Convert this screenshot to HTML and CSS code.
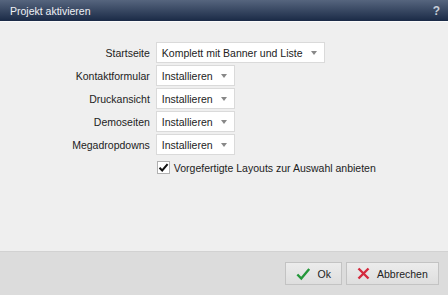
FILE: index.html
```html
<!DOCTYPE html>
<html lang="de">
<head>
    <meta charset="UTF-8">
    <title>Projekt aktivieren</title>
    <link rel="stylesheet" href="styles.css">
</head>
<body>
    <div class="dialog">
        <div class="titlebar">
            <span class="title">Projekt aktivieren</span>
            <span class="help">?</span>
        </div>
        <div class="content">
            <div class="form">
                <label>Startseite</label>
                <div class="select">Komplett mit Banner und Liste<span class="arrow"></span></div>
                <label>Kontaktformular</label>
                <div class="select">Installieren<span class="arrow"></span></div>
                <label>Druckansicht</label>
                <div class="select">Installieren<span class="arrow"></span></div>
                <label>Demoseiten</label>
                <div class="select">Installieren<span class="arrow"></span></div>
                <label>Megadropdowns</label>
                <div class="select">Installieren<span class="arrow"></span></div>
                <span></span>
                <div class="check">
                    <span class="box">
                        <svg width="11" height="11" viewBox="0 0 11 11"><path d="M1.5 5.8 L4.2 8.5 L9.6 2.2" fill="none" stroke="#111" stroke-width="2"/></svg>
                    </span>
                    Vorgefertigte Layouts zur Auswahl anbieten
                </div>
            </div>
        </div>
        <div class="footer">
            <button class="btn">
                <svg width="16" height="14" viewBox="0 0 16 14"><path d="M1.5 7.5 L5.8 12 L14.5 1.5" fill="none" stroke="#24973a" stroke-width="2.6"/></svg>
                Ok
            </button>
            <button class="btn">
                <svg width="13" height="13" viewBox="0 0 13 13"><path d="M1.5 1.5 L11.5 11.5 M11.5 1.5 L1.5 11.5" fill="none" stroke="#d42a3e" stroke-width="2.4"/></svg>
                Abbrechen
            </button>
        </div>
    </div>
</body>
</html>
```

FILE: styles.css
```css
body {
    margin: 0;
    font-family: "Liberation Sans", Arial, sans-serif;
    font-size: 10.5px;
    color: #222;
}
.dialog {
    width: 448px;
    height: 295px;
    display: flex;
    flex-direction: column;
    background-color: #efefef;
}
.titlebar {
    height: 21px;
    display: flex;
    align-items: center;
    justify-content: space-between;
    padding: 0 8px 0 10px;
    background: linear-gradient(#56657e, #1a2a46);
    color: #eef1f5;
    border-bottom: 1px solid #fafafa;
}
.help {
    font-weight: bold;
    font-size: 12px;
    color: #c8ced8;
}
.content {
    flex: 1;
    display: flex;
    justify-content: center;
    padding-top: 20px;
}
.form {
    display: grid;
    grid-template-columns: auto auto;
    column-gap: 6px;
    row-gap: 2px;
    align-content: start;
    align-items: center;
}
.form label {
    text-align: right;
}
.select {
    justify-self: start;
    height: 19px;
    display: flex;
    align-items: center;
    padding: 0 7px 0 5px;
    background-color: #fff;
    border: 1px solid #dadada;
}
.arrow {
    margin-left: 8px;
    width: 0;
    height: 0;
    border-left: 3.5px solid transparent;
    border-right: 3.5px solid transparent;
    border-top: 4px solid #888;
}
.check {
    display: flex;
    align-items: center;
    margin-top: 4px;
    padding-left: 1px;
}
.box {
    width: 11px;
    height: 11px;
    margin-right: 4px;
    background-color: #fff;
    border: 1px solid #b0b0b0;
    display: flex;
}
.footer {
    height: 43px;
    display: flex;
    justify-content: flex-end;
    align-items: center;
    gap: 4px;
    padding-right: 9px;
    background-color: #dcdcdc;
    border-top: 1px solid #d2d2d2;
}
.btn {
    height: 23px;
    display: flex;
    align-items: center;
    gap: 7px;
    padding: 0 10px;
    font-family: inherit;
    font-size: 10.5px;
    color: #222;
    background: linear-gradient(#ececec, #dedede);
    border: 1px solid #c3c3c3;
}
.btn:first-child {
    width: 57px;
}
.btn:last-child {
    width: 93px;
}
```
